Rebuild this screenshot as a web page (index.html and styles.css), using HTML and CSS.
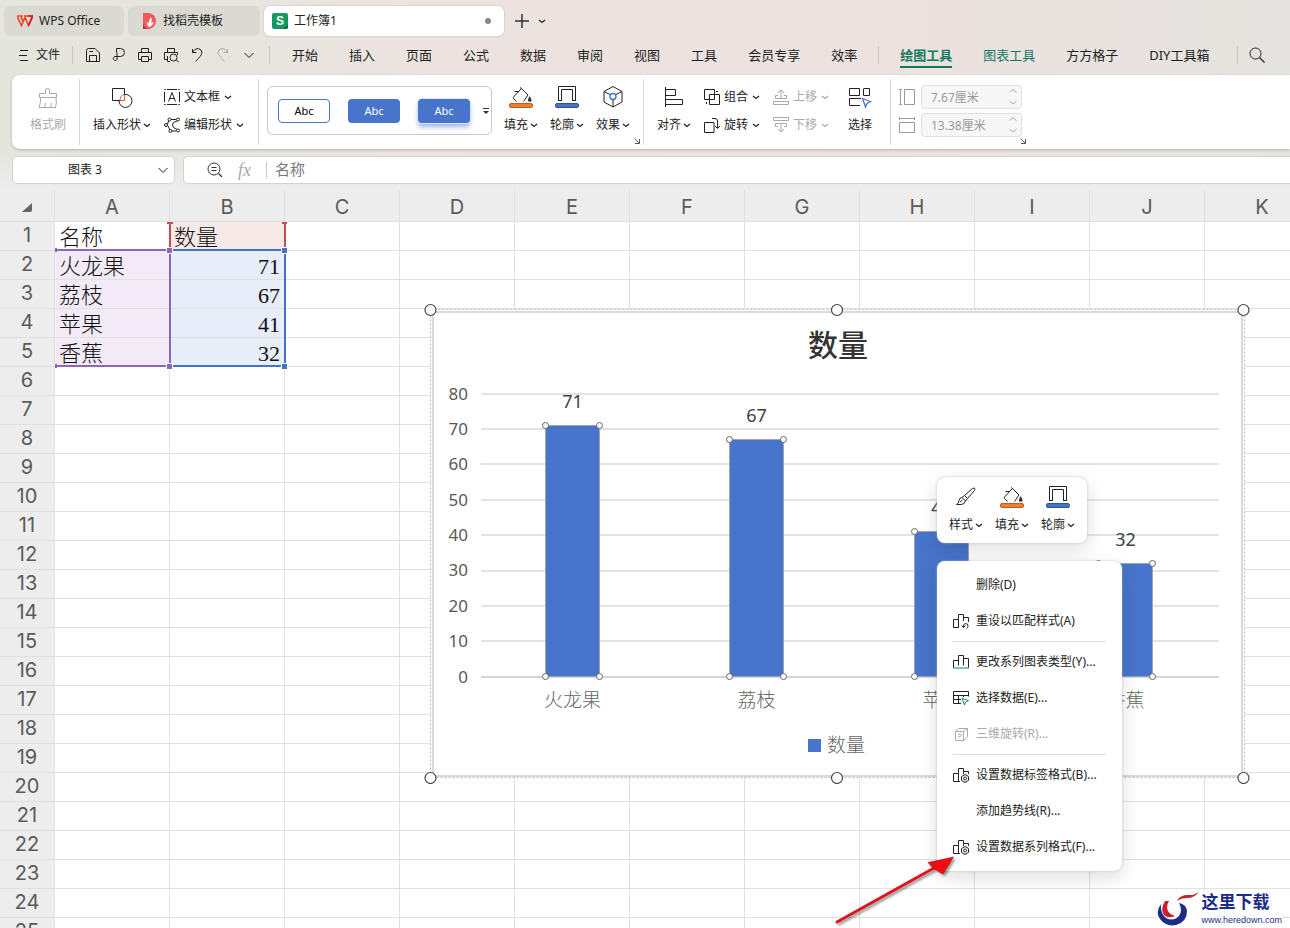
FILE: index.html
```html
<!DOCTYPE html>
<html lang="zh-CN">
<head>
    <meta charset="UTF-8">
    <meta name="viewport" content="width=device-width, initial-scale=1.0">
    <title>工作簿1 - WPS Office</title>
    <link rel="stylesheet" href="styles.css">
</head>
<body>

<!-- Shared icons -->
<svg class="sprite" aria-hidden="true">
    <symbol id="caret" viewBox="0 0 8 8"><path d="M1 3L4 5.500L7 3" fill="none" stroke="currentColor" stroke-width="1.300"/></symbol>
    <symbol id="chevron" viewBox="0 0 12 12"><path d="M1.500 4L6 8.500L10.500 4" fill="none" stroke="currentColor"/></symbol>
    <symbol id="bucket" viewBox="0 0 24 24">
        <path d="M7.500 15.500L4.500 12.500Q4 11.500 4.500 11L12.500 2.500L19 9L14.500 15.500M5.500 5.500H9.500L12.500 2.500L11 1.500" fill="none" stroke="currentColor"/>
        <path d="M20.500 10Q22.500 13 22.500 14.300Q22.500 15.800 20.800 15.800Q19 15.800 19 14.300Q19 13 20.500 10Z" fill="#333"/>
        <rect x=".5" y="17.500" width="23" height="4" rx="1.500" fill="#ed7d31" stroke="#b95f22"/>
    </symbol>
    <symbol id="outline" viewBox="0 0 24 24">
        <path d="M3.500 14.500V.5H20.500V14.500M6.500 14.500V3.500H17.500V14.500M3 14.500H7M17 14.500H21" fill="none" stroke="currentColor"/>
        <rect x=".5" y="17.500" width="23" height="4" rx="1.500" fill="#4472c4" stroke="#2f55a0"/>
    </symbol>
    <symbol id="corner" viewBox="0 0 8 8"><path d="M1.500 1.500L6 6M6.500 2V6.500H2" fill="none" stroke="#555"/></symbol>
    <symbol id="bars" viewBox="0 0 16 16"><path d="M.5 13.500V6.500H5.500M5.500 11.500V1.500H10.500V11.500M10.500 4.500H15.500V13.500" fill="none" stroke="currentColor"/><path d="M0 14H16" stroke="#14866d" stroke-width="1"/></symbol>
    <symbol id="bars-reset" viewBox="0 0 16 16"><path d="M5.500 14.500H.5V6.500H5.500V14.500M5.500 6.500V1.500H10.500V8M10.500 4.500H15.500V9M8.500 12.500L10.500 14.500L12.500 12.500M10.500 14.500Q10 10.500 12.500 10.500Q15.500 10.500 15 13.500Q14.500 15 13.500 15.500" fill="none" stroke="currentColor"/></symbol>
    <symbol id="bars-gear" viewBox="0 0 16 16"><path d="M7 14.500H.5V6.500H5.500V14.500M5.500 6.500V1.500H10.500V7M10.500 4.500H15.500V7M12 7.500L15.500 9.500V13.500L12 15.500L8.500 13.500V9.500Z" fill="none" stroke="currentColor"/><circle cx="12" cy="11.500" r="1.500" fill="none" stroke="currentColor"/></symbol>
</svg>

<!-- Document tabs -->
<header class="tabs" role="tablist">
    <button class="tab tab-home" role="tab">
        <svg class="icon" viewBox="0 0 16 16"><path d="M0 3H6M0 3L4.500 12.500L8 4.500L11.500 12.500L16 3H7M4 4L6.500 9" fill="none" stroke="#ee4a2a" stroke-width="1.700"/><path d="M11.500 12.500L15.500 3H11" fill="none" stroke="#d81e28" stroke-width="1.700"/></svg>
        WPS Office
    </button>
    <button class="tab tab-docer" role="tab">
        <svg class="icon" viewBox="0 0 16 16"><path d="M2 0H7A8 8 0 0 1 7 16H2Z" fill="#f05a5a"/><path d="M2 11V16H7Q3.500 15 2 11Z" fill="#b92f3c"/><path d="M8 14Q5 11 6 9Q8 10 8 14Q7 8 10 4Q12 8 8.500 13Q10 9 12.500 9Q12 13 8 14Z" fill="#fff"/></svg>
        找稻壳模板
    </button>
    <button class="tab tab-book" role="tab" aria-selected="true">
        <svg class="icon" viewBox="0 0 16 16"><rect width="16" height="16" rx="2" fill="#14995f"/><path d="M10 16L16 12V14Q16 16 14 16Z" fill="#0a6f43"/><text x="8" y="12" class="sheet-logo">S</text></svg>
        工作簿1
        <span class="dot"></span>
    </button>
    <button class="plain" aria-label="新建"><svg class="icon" viewBox="0 0 16 16"><path d="M8 1V15M1 8H15" stroke="#333" stroke-width="1.500"/></svg></button>
    <button class="plain" aria-label="标签列表"><svg class="small"><use href="#caret"/></svg></button>
</header>

<!-- Menu bar -->
<nav class="menubar">
    <button class="file">
        <svg class="burger" viewBox="0 0 10 12"><path d="M1 1.500H9M0 6.500H8M1 11.500H9" stroke="currentColor"/></svg>
        文件
    </button>
    <span class="bar-line"></span>
    <div class="quick">
        <button aria-label="保存"><svg class="icon" viewBox="0 0 16 16"><path d="M1.500 14.500V3.500Q1.500 1.500 3.500 1.500H10L14.500 6V14.500ZM4.500 14.500V8.500H11.500V14.500M4.500 4.500H8" fill="none" stroke="currentColor"/></svg></button>
        <button aria-label="输出为PDF"><svg class="icon" viewBox="0 0 16 16"><path d="M5.500 5.500V1.500H9.500A4 4 0 0 1 9.500 9.500H4A2 2 0 1 0 6 12.500V5.500" fill="none" stroke="currentColor"/></svg></button>
        <button aria-label="打印"><svg class="icon" viewBox="0 0 16 16"><path d="M4.500 5V1.500H11.500V5M4.500 12.500H1.500V5.500H14.500V12.500H11.500M4.500 9.500H11.500V14.500H4.500Z" fill="none" stroke="currentColor"/></svg></button>
        <button aria-label="打印预览"><svg class="icon" viewBox="0 0 16 16"><path d="M4.500 5V1.500H11.500V5M5 12.500H1.500V5.500H14.500V8M7 14.500H4.500V9M13.500 13L16 15.500" fill="none" stroke="currentColor"/><circle cx="10.500" cy="10.500" r="3.500" fill="none" stroke="currentColor"/></svg></button>
        <button aria-label="撤销"><svg class="icon" viewBox="0 0 16 16"><path d="M3.500 2V5.500H7.500M3.500 5.500Q5.500 1.500 9 1.500Q13 2 13 6Q12.500 8.500 6.500 14.500" fill="none" stroke="currentColor"/></svg></button>
        <button aria-label="恢复" disabled><svg class="icon" viewBox="0 0 16 16"><path d="M12.500 2V5.500H8.500M12.500 5.500Q10.500 1.500 7 1.500Q3 2 3 6Q3.500 8.500 9.500 14.500" fill="none" stroke="currentColor"/></svg></button>
        <button aria-label="更多"><svg class="medium"><use href="#chevron"/></svg></button>
    </div>
    <span class="bar-line"></span>
    <div class="menus">
        <button>开始</button>
        <button>插入</button>
        <button>页面</button>
        <button>公式</button>
        <button>数据</button>
        <button>审阅</button>
        <button>视图</button>
        <button>工具</button>
        <button>会员专享</button>
        <button>效率</button>
    </div>
    <span class="bar-line"></span>
    <div class="menus menus-tools">
        <button class="active">绘图工具</button>
        <button class="context">图表工具</button>
        <button>方方格子</button>
        <button>DIY工具箱</button>
    </div>
    <span class="bar-line search-line"></span>
    <button class="search" aria-label="搜索"><svg class="icon" viewBox="0 0 16 16"><circle cx="6.500" cy="6.500" r="5.500" fill="none" stroke="currentColor"/><path d="M10.500 10.500L15.500 15.500" stroke="currentColor" stroke-width="1.200"/></svg></button>
</nav>

<!-- Ribbon -->
<section class="ribbon">
    <div class="group group-brush">
        <button class="big" disabled>
            <svg class="large" viewBox="0 0 24 24"><path d="M3.500 7.500H9.500V4Q9.500 2.500 11.500 2.500Q13.500 2.500 13.500 4V7.500H20.500V11.500H3.500ZM4.500 11.500Q5 17 3 21.500H19.500Q21 17 20 11.500M8.500 21Q9.500 19 9.500 17M14.500 21Q15.500 19 15.500 17" fill="none" stroke="currentColor"/></svg>
            <span>格式刷</span>
        </button>
    </div>
    <div class="group group-shape">
        <button class="big">
            <svg class="large" viewBox="0 0 24 24"><path d="M10.500 14.500H2.500V2.500H14.500V8" fill="none" stroke="currentColor"/><path d="M10 14.500Q10 9 14.500 8.500V14.500Z" fill="none" stroke="#d2602a"/><path d="M14.500 8.500A6.500 6.500 0 1 1 9 14.500" fill="none" stroke="currentColor"/></svg>
            <span>插入形状<svg class="small"><use href="#caret"/></svg></span>
        </button>
        <div class="stack">
            <button><svg class="icon" viewBox="0 0 16 16"><path d="M0 .5H2M3 .5H13M14 .5H16M0 15.500H2M3 15.500H13M14 15.500H16M.5 3V13M15.500 3V13M4.500 12.500L8 3.500L11.500 12.500M5.500 9.500H10.500" fill="none" stroke="currentColor"/><path d="M0 .5H2M14 .5H16M0 15.500H2M14 15.500H16" stroke="#2f55c0"/></svg>文本框<svg class="small"><use href="#caret"/></svg></button>
            <button><svg class="icon" viewBox="0 0 16 16"><path d="M3.500 7L5 3M4 9L6 13M7 2.500H12M8 14H12M13 4Q8 5 8.500 8Q8.500 11 13 12.500" fill="none" stroke="currentColor"/><g fill="#fff" stroke="currentColor"><circle cx="2" cy="8" r="1.500"/><circle cx="5.500" cy="2.500" r="1.500"/><circle cx="14" cy="2.500" r="1.500"/><circle cx="6.500" cy="14" r="1.500"/><circle cx="14" cy="13.500" r="1.500"/></g></svg>编辑形状<svg class="small"><use href="#caret"/></svg></button>
        </div>
    </div>
    <div class="group group-style">
        <div class="gallery">
            <button class="swatch swatch-line">Abc</button>
            <button class="swatch">Abc</button>
            <button class="swatch swatch-shadow">Abc</button>
            <button class="more" aria-label="更多样式"><svg class="small" viewBox="0 0 8 8"><path d="M1 1.500H7" stroke="#333"/><path d="M1 4H7L4 7Z" fill="#333"/></svg></button>
        </div>
        <div class="paint">
            <button class="big"><svg class="large"><use href="#bucket"/></svg><span>填充<svg class="small"><use href="#caret"/></svg></span></button>
            <button class="big"><svg class="large"><use href="#outline"/></svg><span>轮廓<svg class="small"><use href="#caret"/></svg></span></button>
            <button class="big"><svg class="large" viewBox="0 0 24 24"><path d="M12 .5L21 5.500V16L12 21L3 16V5.500ZM3 5.500L9 8.500M21 5.500L15 8.500M12 21V14" fill="none" stroke="currentColor"/><circle cx="12" cy="10.500" r="3" fill="none" stroke="#3b6fd4" stroke-width="1.300"/></svg><span>效果<svg class="small"><use href="#caret"/></svg></span></button>
        </div>
        <svg class="small corner"><use href="#corner"/></svg>
    </div>
    <div class="group group-arrange">
        <button class="big"><svg class="large" viewBox="0 0 24 24"><path d="M3.500 1V21M4 3.500H13.500V9.500H4M4 13.500H20.500V18.500H4" fill="none" stroke="currentColor"/></svg><span>对齐<svg class="small"><use href="#caret"/></svg></span></button>
        <div class="stack">
            <button><svg class="icon" viewBox="0 0 16 16"><path d="M.5 .5H10.500V10.500H.5ZM5.500 5.500H15.500V15.500H5.500ZM12 2.500H14M2.500 13V15" fill="none" stroke="currentColor"/></svg>组合<svg class="small"><use href="#caret"/></svg></button>
            <button><svg class="icon" viewBox="0 0 16 16"><path d="M.5 5.500H10V15.500H.5ZM8 1.500H11Q13.500 1.500 13.500 4V11M11 9L13.500 11.500L16 9" fill="none" stroke="currentColor"/></svg>旋转<svg class="small"><use href="#caret"/></svg></button>
        </div>
        <div class="stack">
            <button disabled><svg class="icon" viewBox="0 0 16 16"><path d="M8 1V9M5 4L8 1L11 4M5 6.500H2.500V9.500H13.500V6.500H11M.5 12.500H15.500V15.500H.5Z" fill="none" stroke="currentColor"/></svg>上移<svg class="small"><use href="#caret"/></svg></button>
            <button disabled><svg class="icon" viewBox="0 0 16 16"><path d="M8 15V7M5 12L8 15L11 12M5 9.500H2.500V6.500H13.500V9.500H11M.5 .5H15.500V3.500H.5Z" fill="none" stroke="currentColor"/></svg>下移<svg class="small"><use href="#caret"/></svg></button>
        </div>
        <button class="big select-object"><svg class="large" viewBox="0 0 24 24"><path d="M1.500 9.500V2.500H11.500V9.500ZM16 2.500H21.500V9.500H15.500V2.500M12 19.500H1.500V12.500H13" fill="none" stroke="currentColor"/><path d="M14.500 12.500L22.500 15.500L19 17.500L17.500 21Z" fill="#fff" stroke="#3b6fd4" stroke-width="1.200"/></svg><span>选择</span></button>
    </div>
    <div class="group group-size">
        <label><svg class="icon" viewBox="0 0 16 16"><path d="M0 .5H3M0 15.500H3M1.500 .5V15.500M5.500 .5H15.500V15.500H5.500Z" fill="none" stroke="#999"/></svg><input type="text" value="7.67厘米" aria-label="高度" disabled><svg class="spin" viewBox="0 0 10 18"><path d="M1.500 4.500L5 1.500L8.500 4.500M1.500 13L5 16L8.500 13" fill="none" stroke="#aaa"/></svg></label>
        <label><svg class="icon" viewBox="0 0 16 16"><path d="M.5 0V3M15.500 0V3M.5 1.500H15.500M.5 5.500H15.500V15.500H.5Z" fill="none" stroke="#999"/></svg><input type="text" value="13.38厘米" aria-label="宽度" disabled><svg class="spin" viewBox="0 0 10 18"><path d="M1.500 4.500L5 1.500L8.500 4.500M1.500 13L5 16L8.500 13" fill="none" stroke="#aaa"/></svg></label>
        <svg class="small corner"><use href="#corner"/></svg>
    </div>
</section>

<!-- Name box and formula bar -->
<section class="formula-row">
    <div class="name-box">
        <input type="text" value="图表 3" aria-label="名称框">
        <button aria-label="展开"><svg class="medium"><use href="#chevron"/></svg></button>
    </div>
    <div class="formula">
        <button aria-label="浏览公式结果"><svg class="icon" viewBox="0 0 16 16"><circle cx="7" cy="7" r="6" fill="none" stroke="#333"/><path d="M11.500 11.500L15 15M4.500 5.500H9.500M4.500 8.500H9.500" stroke="#333" stroke-width="1.200"/></svg></button>
        <button class="fx" aria-label="插入函数">fx</button>
        <span class="formula-line"></span>
        <input type="text" value="名称" aria-label="编辑栏">
    </div>
</section>

<!-- Worksheet -->
<main class="sheet">
    <table class="grid">
        <thead>
            <tr>
                <th class="select-all"><svg class="medium" viewBox="0 0 12 12"><path d="M11 2V9Q11 11 9 11H1Z" fill="#666"/></svg></th>
                <th>A</th><th>B</th><th>C</th><th>D</th><th>E</th><th>F</th><th>G</th><th>H</th><th>I</th><th>J</th><th>K</th>
            </tr>
        </thead>
        <tbody id="rows"></tbody>
    </table>

    <!-- Source ranges of the chart, drawn over cells A1:B5 -->
    <svg class="ranges" viewBox="52 220 236 150" aria-hidden="true">
        <path d="M170 223V249M285 223V249" stroke="#c0504d" stroke-width="2"/>
        <path d="M167 223H173M282 223H287" stroke="#c0504d" stroke-width="2"/>
        <path d="M56 250H170V366H56M56 248V252M56 364V368" fill="none" stroke="#8d67b5" stroke-width="2"/>
        <path d="M172 250H285V366H172" fill="none" stroke="#4472c4" stroke-width="2"/>
        <g stroke="#fff"><path d="M166.500 247.500H172.500V253.500H166.500ZM166.500 363.500H172.500V369.500H166.500Z" fill="#8d67b5"/><path d="M281.500 247.500H287.500V253.500H281.500ZM281.500 363.500H287.500V369.500H281.500Z" fill="#4472c4"/></g>
    </svg>

    <svg class="chart" viewBox="420 300 830 484" role="img" aria-label="数量">
        <rect x="430.500" y="309.500" width="814" height="468" fill="#fff" stroke="#bbb" stroke-dasharray="2 2"/>
        <rect x="433" y="312" width="809" height="464" fill="#fff" stroke="#d9d9d9" stroke-width="2"/>
        <text x="838" y="356" class="chart-title">数量</text>
        <path d="M481 394H1219M481 429H1219M481 464H1219M481 500H1219M481 535H1219M481 571H1219M481 606H1219M481 641H1219" stroke="#e3e3e3" stroke-width="2"/>
        <path d="M481 677H1219" stroke="#d4d4d4" stroke-width="2"/>
        <g class="axis-y">
            <text x="468" y="400">80</text>
            <text x="468" y="435">70</text>
            <text x="468" y="470">60</text>
            <text x="468" y="506">50</text>
            <text x="468" y="541">40</text>
            <text x="468" y="576">30</text>
            <text x="468" y="612">20</text>
            <text x="468" y="647">10</text>
            <text x="468" y="683">0</text>
        </g>
        <g id="bars-layer"></g>
        <rect x="808" y="739" width="13" height="13" fill="#4874cb"/>
        <text x="827" y="752" class="legend">数量</text>
        <g fill="#fff" stroke="#444" stroke-width="1.200">
            <circle cx="430.500" cy="310" r="5.500"/><circle cx="837" cy="310" r="5.500"/><circle cx="1243.500" cy="310" r="5.500"/>
            <circle cx="430.500" cy="778" r="5.500"/><circle cx="837" cy="778" r="5.500"/><circle cx="1243.500" cy="778" r="5.500"/>
        </g>
    </svg>

    <!-- Floating toolbar -->
    <div class="mini-bar">
        <button class="big"><svg class="large" viewBox="0 0 24 24"><path d="M2.500 18.500Q5 17.500 5 14.500Q5.500 11.500 8 11.500L11.500 15Q11 18 7.500 18.500ZM8 11.500L10.500 9.500L13.500 12.500L11.500 15M10.500 9.500L18.500 2.500Q20.500 1.500 20.800 2.500Q21 3.500 20.500 4.500L13.500 12.500M6 16L8.500 14" fill="none" stroke="currentColor"/></svg><span>样式<svg class="small"><use href="#caret"/></svg></span></button>
        <button class="big"><svg class="large"><use href="#bucket"/></svg><span>填充<svg class="small"><use href="#caret"/></svg></span></button>
        <button class="big"><svg class="large"><use href="#outline"/></svg><span>轮廓<svg class="small"><use href="#caret"/></svg></span></button>
    </div>

    <!-- Context menu -->
    <div class="context-menu" role="menu">
        <button role="menuitem"><span class="icon"></span>删除(D)</button>
        <button role="menuitem"><svg class="icon"><use href="#bars-reset"/></svg>重设以匹配样式(A)</button>
        <hr>
        <button role="menuitem"><svg class="icon"><use href="#bars"/></svg>更改系列图表类型(Y)...</button>
        <button role="menuitem"><svg class="icon" viewBox="0 0 16 16"><path d="M8 13.500H.5V1.500H15.500V6.500M.5 5.500H15.500M.5 9.500H8M5.500 5.500V13.500M10.500 5.500V7" fill="none" stroke="currentColor"/><path d="M9 8.500L15.500 10.500L12.500 12L11.500 15Z" fill="#fff" stroke="#14866d"/></svg>选择数据(E)...</button>
        <button role="menuitem" disabled><svg class="icon" viewBox="0 0 16 16"><path d="M2.500 5.500H10.500V14.500H2.500ZM2.500 5.500L5.500 2.500H14.500V11L10.500 14.500M10.500 5.500L14.500 2.500M5 8.500Q8 7 8.500 9Q8.500 11 5 11" fill="none" stroke="currentColor"/></svg>三维旋转(R)...</button>
        <hr>
        <button role="menuitem"><svg class="icon"><use href="#bars-gear"/></svg>设置数据标签格式(B)...</button>
        <button role="menuitem"><span class="icon"></span>添加趋势线(R)...</button>
        <button role="menuitem"><svg class="icon"><use href="#bars-gear"/></svg>设置数据系列格式(F)...</button>
    </div>

    <svg class="arrow" viewBox="830 850 130 78" aria-hidden="true">
        <path d="M837 922L934 868" stroke="#e0141b" stroke-width="3" stroke-linecap="round"/>
        <path d="M953.500 857L928 862.500L933 868L943 874Z" fill="#f00a12" stroke="#a11" stroke-width=".6"/>
    </svg>

    <div class="watermark">
        <svg viewBox="0 0 42 36" aria-hidden="true">
            <path d="M4 13Q-2 21 3 28Q9 36 19 34Q30 31 30 20Q29 13 22 12Q26 19 22 25Q16 31 9 27Q3 22 4 13Z" fill="#1c2b86"/>
            <path d="M8 10Q3 18 7 24Q11 28 18 25Q11 23 10 17Q10 13 12 10Z" fill="#c8202c"/>
            <path d="M20 10Q22 5 29 4L36 4L42 1Q37 7 30 7Q24 7 20 10Z" fill="#c8202c"/>
        </svg>
        <div>
            <strong>这里下载</strong>
            <span>www.heredown.com</span>
        </div>
    </div>
</main>

<script>
    const cells = [
        ["名称", "数量"],
        ["火龙果", 71],
        ["荔枝", 67],
        ["苹果", 41],
        ["香蕉", 32]
    ];

    // Fill the worksheet rows
    const rows = document.getElementById("rows");
    for (let r = 1; r <= 25; r++) {
        const tr = document.createElement("tr");
        const th = document.createElement("th");
        th.textContent = r;
        tr.appendChild(th);
        for (let c = 0; c < 11; c++) {
            const td = document.createElement("td");
            const values = cells[r - 1];
            if (values && c < 2) {
                td.textContent = values[c];
                if (typeof values[c] === "number") td.classList.add("number");
                if (c === 1) td.classList.add(r === 1 ? "range-name" : "range-value");
                if (c === 0 && r > 1) td.classList.add("range-category");
            }
            tr.appendChild(td);
        }
        rows.appendChild(tr);
    }

    // Draw the bars, each with its labels and four handles
    const base = 676.5;
    let svg = "";
    cells.slice(1).forEach(([name, value], i) => {
        const mid = 572.5 + Math.floor(i * 184.5);
        const top = Math.round(base - value * 3.54) + 0.5;
        svg += `<rect x="${mid - 27}" y="${top}" width="54" height="${base - top}" class="bar"/>`;
        svg += `<text x="${mid}" y="${top - 17.5}" class="value">${value}</text>`;
        svg += `<text x="${mid}" y="707" class="category">${name}</text>`;
        [[-27, top], [27, top], [-27, base], [27, base]].forEach(([dx, y]) => {
            svg += `<circle cx="${mid + dx}" cy="${y}" r="3" class="handle"/>`;
        });
    });
    document.getElementById("bars-layer").innerHTML = svg;
</script>

</body>
</html>
```

FILE: styles.css
```css
* {
    box-sizing: border-box;
}

body {
    margin: 0;
    height: 100vh;
    display: flex;
    flex-direction: column;
    overflow: hidden;
    font-family: "Noto Sans", "Noto Sans CJK SC", sans-serif;
    font-size: 12px;
    line-height: 16px;
    color: #222;
    background: linear-gradient(90deg, #e4e5dc 0%, #e7e5de 15%, #ece3e0 33%, #ece2e0 70%, #e5e3df 100%);
}

button,
input {
    font: inherit;
    color: inherit;
    border: 0;
    padding: 0;
    margin: 0;
    background: none;
    outline: none;
}

button {
    display: flex;
    align-items: center;
    white-space: nowrap;
}

button:disabled {
    color: #aaa;
}

svg {
    display: block;
    flex: none;
}

.sprite {
    position: absolute;
    width: 0;
    height: 0;
}

.icon {
    width: 16px;
    height: 16px;
    flex: none;
}

.small {
    width: 8px;
    height: 8px;
}

.medium {
    width: 12px;
    height: 12px;
}

.large {
    width: 24px;
    height: 24px;
}

/* Document tabs */
.tabs {
    flex: none;
    display: flex;
    gap: 4px;
    height: 38px;
    padding: 6px 4px 2px;
}

.tab {
    height: 30px;
    gap: 6px;
    padding: 0 13px;
    border-radius: 6px;
    background: #dad9d2;
}

.tab-home {
    width: 120px;
}

.tab-docer {
    width: 132px;
}

.tab-book {
    width: 240px;
    padding: 0 13px 0 8px;
    background: #fff;
    box-shadow: 0 0 2px #b5b0ae;
}

.sheet-logo {
    font: bold 12px "Liberation Sans", sans-serif;
    fill: #fff;
    text-anchor: middle;
}

.dot {
    width: 6px;
    height: 6px;
    margin-left: auto;
    border-radius: 50%;
    background: #888;
}

.plain {
    padding: 0 6px;
}

.plain + .plain {
    padding: 0;
    margin-left: -2px;
}

/* Menu bar */
.menubar {
    flex: none;
    display: flex;
    align-items: center;
    height: 37px;
    padding: 0 0 3px 19px;
}

.file {
    gap: 7px;
    width: 53px;
}

.burger {
    width: 10px;
    height: 12px;
}

.bar-line {
    width: 1px;
    height: 18px;
    background: #c9c5c0;
}

.quick {
    display: flex;
    gap: 10px;
    margin: 0 12px;
}

.quick button {
    width: 16px;
    height: 16px;
    justify-content: center;
}

.menus {
    display: flex;
    gap: 31px;
    margin: 0 21px 0 22px;
    font-size: 13px;
}

.menus-tools {
    margin: 0 28px 0 21px;
}

.menus button {
    height: 26px;
    border-top: 2px solid transparent;
    border-bottom: 2px solid transparent;
}

.menus .active {
    font-weight: bold;
    color: #14795f;
    border-bottom-color: #14795f;
}

.menus .context {
    color: #14795f;
}

.search-line {
    margin-right: 11px;
}

/* Ribbon */
.ribbon {
    flex: none;
    display: flex;
    height: 74px;
    margin-left: 12px;
    padding: 4px 0;
    border-radius: 8px 0 0 8px;
    background: #fff;
    box-shadow: 0 1px 3px #b5b0ae;
}

.group {
    position: relative;
    display: flex;
    align-items: flex-start;
    padding-top: 7px;
}

.group + .group {
    border-left: 1px solid #d8d8d8;
}

.big {
    flex-direction: column;
    gap: 7px;
}

.big span {
    display: flex;
    align-items: center;
    gap: 2px;
}

.stack {
    display: flex;
    flex-direction: column;
    gap: 12px;
    padding-top: 3px;
}

.stack button {
    gap: 4px;
}

.corner {
    position: absolute;
    right: 2px;
    bottom: 0;
}

.group-brush {
    width: 67px;
    padding-left: 5px;
    justify-content: center;
}

.group-shape {
    width: 179px;
    gap: 13px;
    padding-left: 13px;
}

.group-style {
    width: 385px;
    gap: 12px;
    padding-left: 8px;
}

.gallery {
    display: flex;
    align-items: center;
    gap: 18px;
    width: 225px;
    height: 49px;
    padding-left: 10px;
    border: 1px solid #c8c8c8;
    border-radius: 6px;
}

.swatch {
    width: 52px;
    height: 24px;
    justify-content: center;
    border-radius: 4px;
    font-size: 11px;
    color: #fff;
    background: #4874cb;
}

.swatch-line {
    color: #000;
    background: #fff;
    border: 1px solid #4874cb;
}

.swatch-shadow {
    box-shadow: 0 0 0 1px #dce5f8, 0 4px 5px #9fb5e4;
}

.more {
    margin-left: -6px;
}

.paint {
    display: flex;
    gap: 12px;
}

.group-arrange {
    width: 247px;
    gap: 13px;
    padding-left: 13px;
}

.select-object {
    margin-left: 6px;
}

.group-size {
    width: 139px;
    flex-direction: column;
    gap: 4px;
    padding: 6px 0 0 8px;
}

.group-size label {
    position: relative;
    display: flex;
    align-items: center;
    gap: 6px;
}

.group-size input {
    width: 101px;
    height: 24px;
    padding: 0 9px;
    border: 1px solid #e0e0e0;
    border-radius: 4px;
    color: #999;
    background: #f7f7f7;
}

.spin {
    position: absolute;
    right: 4px;
    width: 10px;
    height: 18px;
}

/* Formula row */
.formula-row {
    flex: none;
    display: flex;
    gap: 8px;
    height: 41px;
    padding: 7px 0 6px 12px;
    background: linear-gradient(transparent, #ededed);
}

.name-box,
.formula {
    display: flex;
    align-items: center;
    height: 28px;
    background: #fff;
    border: 1px solid #d5d3d0;
    border-radius: 5px;
}

.name-box {
    width: 163px;
    padding-right: 5px;
}

.name-box input {
    flex: 1;
    min-width: 0;
    text-align: center;
}

.formula {
    flex: 1;
    gap: 15px;
    padding-left: 23px;
    border-right: 0;
    border-radius: 5px 0 0 5px;
}

.fx {
    font: italic 18px/20px "Liberation Serif", serif;
    color: #aaa;
}

.formula-line {
    width: 1px;
    height: 16px;
    margin-right: -7px;
    background: #ccc;
}

.formula input {
    flex: 1;
    padding-bottom: 3px;
    font-size: 15px;
    line-height: 20px;
    color: #777;
}

/* Worksheet */
.sheet {
    position: relative;
    flex: 1;
    overflow: hidden;
    background: #fff;
}

.grid {
    width: 1320px;
    table-layout: fixed;
    border-spacing: 0;
}

.grid th,
.grid td {
    width: 115px;
    height: 29px;
    padding: 0;
    border-right: 1px solid #e0e0e0;
    border-bottom: 1px solid #e0e0e0;
    overflow: hidden;
}

.grid th {
    padding-bottom: 2px;
    font: 20px/26px Inter, sans-serif;
    color: #5a5a5a;
    background: #ededed;
}

.grid thead th {
    height: 32px;
    padding: 2px 0 0;
}

.grid th:first-child {
    width: 55px;
}

.select-all svg {
    margin: 0 auto;
}

.grid td {
    padding: 3px 4px 0;
    font: 22px/25px "Liberation Serif", "Noto Sans CJK SC", serif;
    font-weight: 300;
    color: #111;
}

.grid .number {
    text-align: right;
}

.grid .range-name {
    background: #f8e9e9;
}

.grid .range-category {
    background: #f2ebf7;
}

.grid .range-value {
    background: #e7edf9;
}

.ranges {
    position: absolute;
    left: 52px;
    top: 30px;
    width: 236px;
    height: 150px;
}

/* Chart */
.chart {
    position: absolute;
    left: 420px;
    top: 110px;
    width: 830px;
    height: 484px;
    font-family: "Noto Sans", "Noto Sans CJK SC", sans-serif;
}

.chart-title {
    font-size: 30px;
    font-weight: 500;
    fill: #333;
    text-anchor: middle;
}

.axis-y {
    font-size: 17px;
    fill: #595959;
    text-anchor: end;
}

.bar {
    fill: #4874cb;
    stroke: #9aa6bd;
}

.value {
    font-size: 18px;
    fill: #404040;
    text-anchor: middle;
}

.category {
    font-size: 19px;
    font-weight: 300;
    fill: #666;
    text-anchor: middle;
}

.legend {
    font-size: 19px;
    font-weight: 300;
    fill: #666;
}

.handle {
    fill: #fff;
    stroke: #666;
}

/* Floating toolbar and context menu */
.mini-bar,
.context-menu {
    position: absolute;
    left: 937px;
    background: #fff;
    border-radius: 8px;
    box-shadow: 0 0 2px #bbb, 0 6px 18px rgba(0, 0, 0, .14);
}

.mini-bar {
    top: 287px;
    display: flex;
    gap: 12px;
    padding: 9px 12px 10px;
}

.context-menu {
    top: 371px;
    width: 185px;
    padding: 6px 16px;
}

.context-menu button {
    width: 100%;
    height: 36px;
    gap: 7px;
}

.context-menu hr {
    height: 1px;
    margin: 2px 0;
    border: 0;
    background: #ddd;
}

.arrow {
    position: absolute;
    left: 830px;
    top: 660px;
    width: 130px;
    height: 78px;
    filter: drop-shadow(2px 2px 1px rgba(0, 0, 0, .4));
}

.watermark {
    position: absolute;
    right: 8px;
    bottom: 0;
    display: flex;
    gap: 2px;
    padding-bottom: 1px;
    background: #fff;
    color: #1c2b86;
}

.watermark svg {
    width: 42px;
    height: 36px;
}

.watermark div {
    display: flex;
    flex-direction: column;
}

.watermark strong {
    font-size: 17px;
    line-height: 22px;
}

.watermark span {
    font: 9px/14px "Liberation Sans", sans-serif;
}
```
